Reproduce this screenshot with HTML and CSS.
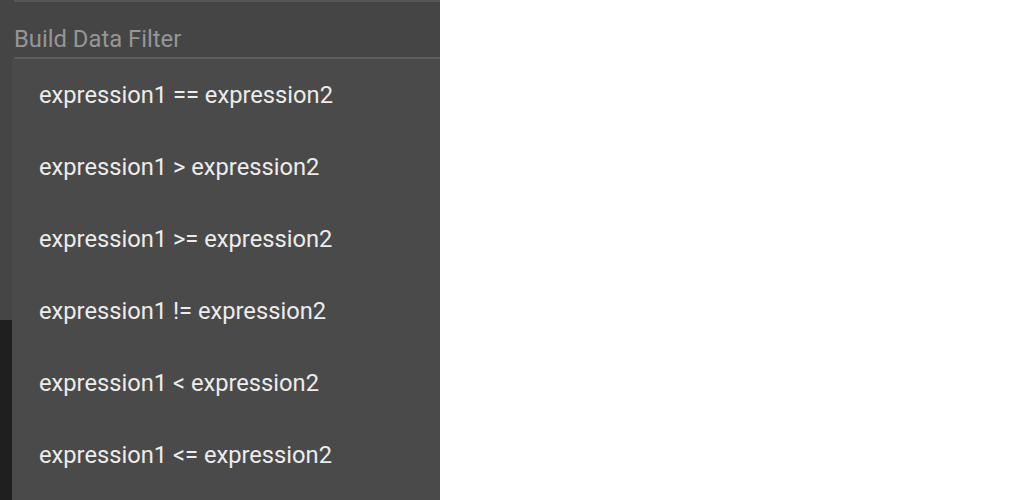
FILE: index.html
```html
<!DOCTYPE html>
<html>
<head>
<meta charset="utf-8">
<link rel="stylesheet" href="styles.css">
</head>
<body>
<div class="stage">
  <div class="dialog">
    <div class="topline"></div>
    <div class="label">Build Data Filter</div>
    <div class="field"></div>
  </div>
  <div class="below"></div>
  <ul class="menu">
    <li>expression1 == expression2</li>
    <li>expression1 &gt; expression2</li>
    <li>expression1 &gt;= expression2</li>
    <li>expression1 != expression2</li>
    <li>expression1 &lt; expression2</li>
    <li>expression1 &lt;= expression2</li>
  </ul>
</div>
</body>
</html>
```
FILE: styles.css
```css
html, body {
  margin: 0;
  padding: 0;
  background: #ffffff;
}
.stage {
  position: relative;
  width: 440px;
  height: 500px;
  font-family: Roboto, "Liberation Sans", sans-serif;
  display: flex;
  flex-direction: column;
}
.dialog {
  height: 320px;
  background: #454545;
  display: flex;
  flex-direction: column;
}
.topline {
  margin-left: 14px;
  height: 2px;
  background: #575757;
}
.label {
  margin: 23px 0 0 14px;
  font-size: 23.8px;
  line-height: 28px;
  color: #969696;
}
.field {
  margin: 4px 0 0 14px;
  flex: 1;
  border-top: 2px solid #5c5c5c;
  border-left: 2px solid #5c5c5c;
}
.below {
  flex: 1;
  background: #1f1f1f;
}
.menu {
  position: absolute;
  left: 12px;
  top: 59px;
  right: 0;
  bottom: 0;
  margin: 0;
  padding: 0;
  list-style: none;
  background: #4a4a4a;
}
.menu li {
  height: 72px;
  display: flex;
  align-items: center;
  padding-left: 27px;
  font-size: 23.7px;
  color: #ececec;
}
```
